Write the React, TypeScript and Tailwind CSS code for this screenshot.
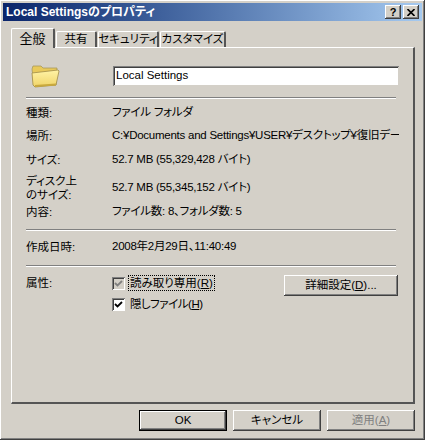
const fontStack = "font-['Liberation_Sans','Noto_Sans_CJK_JP',sans-serif] [font-feature-settings:'palt']";

const bevel =
  "shadow-[inset_-1px_-1px_0_#404040,inset_1px_1px_0_#ffffff,inset_-2px_-2px_0_#808080,inset_2px_2px_0_#d4d0c8]";

function Tab({ label, active, width }: { label: string; active?: boolean; width: string }) {
  return (
    <div
      className={`${width} flex items-center justify-center whitespace-nowrap rounded-t-[2px] border-l border-t border-white border-r-2 border-r-[#555555] bg-[#d4d0c8] ${
        active ? "relative z-10 -mb-px h-[20px] text-[13px]" : "h-[16px] text-[11.5px]"
      }`}
    >
      {label}
    </div>
  );
}

function Separator({ className }: { className: string }) {
  return <div className={`mr-[17px] h-[2px] border-t border-[#808080] border-b-white border-b ${className}`} />;
}

function InfoRow({ label, value, className }: { label: React.ReactNode; value: string; className: string }) {
  return (
    <div className={`grid grid-cols-[86px_1fr] items-center ${className}`}>
      <div className="leading-[14px]">{label}</div>
      <div className="w-[287px] overflow-hidden whitespace-nowrap tracking-[-0.25px]">{value}</div>
    </div>
  );
}

function Check({ disabled }: { disabled?: boolean }) {
  return (
    <div className={`flex h-[13px] w-[13px] items-center justify-center shadow-[inset_1px_1px_0_#808080,inset_-1px_-1px_0_#ffffff,inset_2px_2px_0_#404040] ${disabled ? "bg-[#d4d0c8]" : "bg-white"}`}>
      <svg width="9" height="9" viewBox="0 0 9 9">
        <path d="M1 4 L3.5 6.5 L8 2" fill="none" stroke={disabled ? "#808080" : "#000000"} strokeWidth="1.8" />
      </svg>
    </div>
  );
}

function FolderIcon() {
  return (
    <svg width="30" height="24" viewBox="0 0 30 24">
      <defs>
        <linearGradient id="folderFront" x1="0" y1="0" x2="0" y2="1">
          <stop offset="0" stopColor="#fff3a6" />
          <stop offset="1" stopColor="#f0d468" />
        </linearGradient>
      </defs>
      <path d="M2 5 L3 2 L11 2 L13 4 L27 4 L26 21 L4 22 Z" fill="#e8c95a" stroke="#a89a5a" strokeWidth="0.8" />
      <path d="M2 9 L28 6 L29 7 L26 21 L5 23 L3 21 Z" fill="url(#folderFront)" stroke="#a08c48" strokeWidth="0.8" />
      <path d="M5 21 L26 19.5 L25.5 21.5 L5 23 Z" fill="#c9a93e" />
    </svg>
  );
}

function DialogButton({ children, isDefault, disabled }: { children: React.ReactNode; isDefault?: boolean; disabled?: boolean }) {
  return (
    <div
      className={`flex h-[21px] w-[88px] items-center justify-center ${
        isDefault ? "border border-black" : ""
      } ${disabled ? "text-[#808080]" : ""} ${bevel}`}
    >
      {children}
    </div>
  );
}

export default function App() {
  return (
    <div className={`${fontStack} flex h-[440px] w-[425px] flex-col bg-[#d4d0c8] p-[3px] text-[11.5px] text-black shadow-[inset_-1px_-1px_0_#404040,inset_1px_1px_0_#ffffff,inset_-2px_-2px_0_#808080]`}>
      <div className="flex h-[18px] shrink-0 items-center justify-between bg-gradient-to-r from-[#0a246a] to-[#a6caf0] pl-[3px] pr-[3px]">
        <span className="text-[12px] font-bold text-white">Local Settingsのプロパティ</span>
        <div className="flex gap-[2px]">
          <div className={`flex h-[14px] w-[16px] items-center justify-center bg-[#d4d0c8] text-[11px] font-bold leading-none ${bevel}`}>?</div>
          <div className={`flex h-[14px] w-[16px] items-center justify-center bg-[#d4d0c8] ${bevel}`}>
            <svg width="8" height="7" viewBox="0 0 8 7">
              <path d="M0.5 0 L7.5 7 M7.5 0 L0.5 7" stroke="#000000" strokeWidth="1.6" />
            </svg>
          </div>
        </div>
      </div>

      <div className="ml-[8px] mt-[7px] flex h-[19px] items-end gap-px">
        <Tab label="全般" active width="w-[44px]" />
        <Tab label="共有" width="w-[41px]" />
        <Tab label="セキュリティ" width="w-[61px]" />
        <Tab label="カスタマイズ" width="w-[66px]" />
      </div>

      <div className="ml-[8px] h-[357px] w-[404px] border-l border-t border-white border-r-2 border-b-2 border-r-[#555555] border-b-[#555555] pl-[14px]">
        <div className="mt-[16px] flex items-center">
          <div className="ml-[4px] w-[83px]">
            <FolderIcon />
          </div>
          <div className="flex h-[20px] w-[286px] items-center bg-white pl-[3px] shadow-[inset_1px_1px_0_#808080,inset_-1px_-1px_0_#d4d0c8,inset_2px_2px_0_#404040]">
            Local Settings
          </div>
        </div>
        <Separator className="mt-[9px]" />
        <InfoRow label="種類:" value="ファイル フォルダ" className="mt-[7px] h-[14px]" />
        <InfoRow label="場所:" value="C:¥Documents and Settings¥USER¥デスクトップ¥復旧データ" className="mt-[9px] h-[14px]" />
        <InfoRow label="サイズ:" value="52.7 MB (55,329,428 バイト)" className="mt-[10px] h-[14px]" />
        <InfoRow label={<>ディスク上<br />のサイズ:</>} value="52.7 MB (55,345,152 バイト)" className="mt-[7px] h-[28px]" />
        <InfoRow label="内容:" value="ファイル数: 8、フォルダ数: 5" className="mt-[3px] h-[14px]" />
        <Separator className="mt-[10px]" />
        <InfoRow label="作成日時:" value="2008年2月29日、11:40:49" className="mt-[9px] h-[14px]" />
        <Separator className="mt-[11px]" />

        <div className="mt-[8px] grid grid-cols-[86px_172px_1fr]">
          <div>属性:</div>
          <div className="flex flex-col gap-[6px]">
            <div className="flex items-center gap-[3px]">
              <Check disabled />
              <span className="border border-dotted border-black px-px leading-[14px]">
                読み取り専用(<u>R</u>)
              </span>
            </div>
            <div className="flex items-center gap-[5px]">
              <Check />
              <span className="leading-[14px] tracking-[-0.5px]">
                隠しファイル(<u>H</u>)
              </span>
            </div>
          </div>
          <div className={`flex h-[21px] w-[114px] items-center justify-center ${bevel}`}>
            詳細設定(<u>D</u>)...
          </div>
        </div>
      </div>

      <div className="mt-[6px] flex justify-end gap-[6px] pr-[7px]">
        <DialogButton isDefault>OK</DialogButton>
        <DialogButton>キャンセル</DialogButton>
        <DialogButton disabled>
          適用(<u>A</u>)
        </DialogButton>
      </div>
    </div>
  );
}
